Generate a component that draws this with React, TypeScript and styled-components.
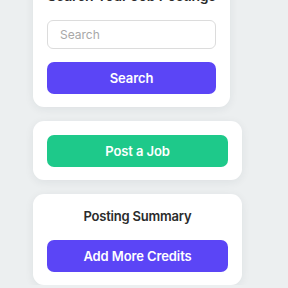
import React from "react";
import styled, { createGlobalStyle } from "styled-components";

const GlobalStyle = createGlobalStyle`
  html, body {
    margin: 0;
    padding: 0;
    background: #eceff0;
    font-family: Inter, "Noto Sans", sans-serif;
    overflow: hidden;
  }
`;

const Sidebar = styled.div`
  display: flex;
  flex-direction: column;
  align-items: flex-start;
  gap: 14px;
  padding-left: 33px;
  margin-top: -26px;
`;

const Card = styled.div<{ $width: number }>`
  width: ${(p) => p.$width}px;
  box-sizing: border-box;
  background: #ffffff;
  border-radius: 11px;
  padding: 14px 14px 13px;
  display: flex;
  flex-direction: column;
  box-shadow: 0 2px 10px rgba(30, 40, 50, 0.07);
`;

const CardTitle = styled.h3<{ $size: number }>`
  margin: 0 0 16px;
  text-align: center;
  font-size: ${(p) => p.$size}px;
  line-height: 16px;
  font-weight: 600;
  color: #2b2b2b;
  letter-spacing: -0.2px;
`;

const SearchInput = styled.input`
  height: 29px;
  box-sizing: border-box;
  border: 1px solid #dcdcdc;
  border-radius: 6px;
  padding: 0 12px;
  font-family: inherit;
  font-size: 12px;
  color: #333;
  outline: none;
  margin-bottom: 13px;

  &::placeholder {
    color: #a8a8a8;
  }
`;

const ActionButton = styled.button<{ $color: string }>`
  height: 32px;
  border: none;
  border-radius: 7px;
  background: ${(p) => p.$color};
  color: #ffffff;
  font-family: inherit;
  font-size: 13px;
  font-weight: 600;
  letter-spacing: -0.1px;
  cursor: pointer;
`;

const App: React.FC = () => {
  return (
    <>
      <GlobalStyle />
      <Sidebar>
        <Card $width={197}>
          <CardTitle $size={14}>Search Your Job Postings</CardTitle>
          <SearchInput type="text" placeholder="Search" />
          <ActionButton $color="#5b45f6">Search</ActionButton>
        </Card>
        <Card $width={209}>
          <ActionButton $color="#1ec98a">Post a Job</ActionButton>
        </Card>
        <Card $width={209}>
          <CardTitle $size={13}>Posting Summary</CardTitle>
          <ActionButton $color="#5b45f6">Add More Credits</ActionButton>
        </Card>
      </Sidebar>
    </>
  );
};

export default App;
